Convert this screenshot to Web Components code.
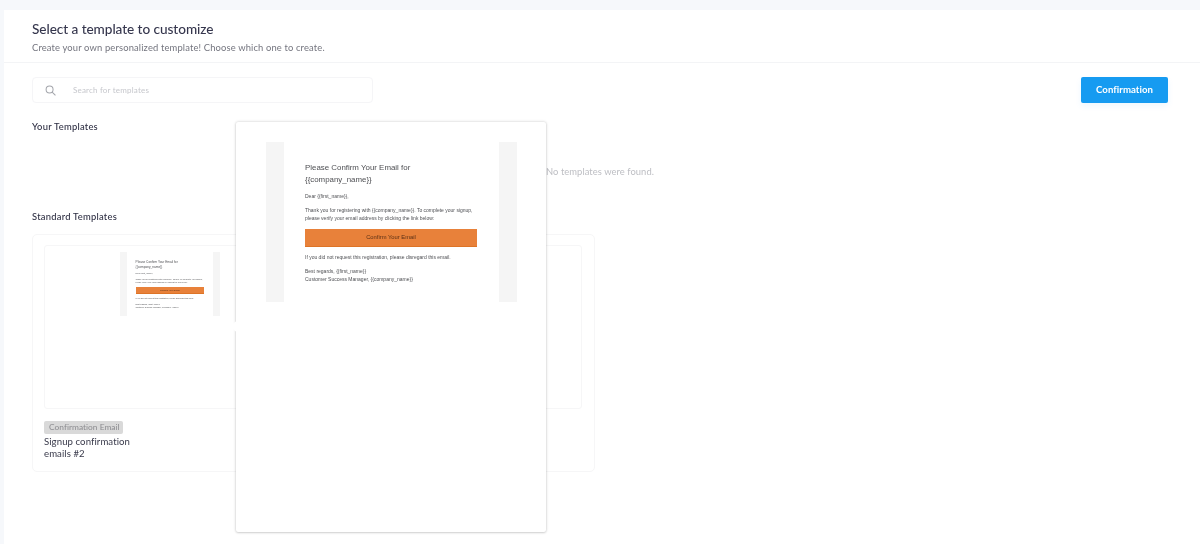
<!DOCTYPE html>
<html><head><meta charset="utf-8"><style>
html,body{margin:0;height:100%;overflow:hidden}
body{background:#f6f8fb;font-family:"Lato","Noto Sans",sans-serif;color:#2d2f45}
</style></head><body>
<template-app></template-app>
<script>
function def(name,css,html){
  customElements.define(name,class extends HTMLElement{
    constructor(){super();const r=this.attachShadow({mode:'open'});r.innerHTML='<style>'+css+'</style>'+html;}
  });
}
def('page-header',`:host{display:block;height:53px;box-sizing:border-box;padding:12px 28px 0;border-bottom:1px solid #f3f4f6}
h1{margin:0;font:500 13.6px/14px "Lato",sans-serif;letter-spacing:-.05px;color:#35364d}
p{margin:6px 0 0;font:400 9.4px/12px "Lato",sans-serif;letter-spacing:.15px;color:#74757f}`,
`<h1><slot name="title"></slot></h1><p><slot name="sub"></slot></p>`);

def('search-box',`:host{display:flex;align-items:center;box-sizing:border-box;width:341px;height:26px;border:1px solid #f5f5f7;border-radius:4px;padding-left:12px;background:#fff}
svg{width:11px;height:11px;flex:none}
span{margin-left:17px;font:400 8px/10px "Lato",sans-serif;letter-spacing:.2px;color:#c6c7cc}`,
`<svg viewBox="0 0 12 12" fill="none" stroke="#a3a5ab" stroke-width="1.1"><circle cx="5" cy="5" r="3.8"/><path d="M7.8 7.8l3.6 3.6"/></svg><span><slot></slot></span>`);

def('blue-button',`:host{display:flex;align-items:center;justify-content:center;box-sizing:border-box;width:87px;height:26px;border-radius:2px;background:#169bf1;color:#fff;font:700 9.6px/12px "Lato",sans-serif;letter-spacing:.05px;box-shadow:0 3px 6px rgba(22,155,241,.08)}`,`<slot></slot>`);

def('section-title',`:host{display:block;font:500 9.4px/12px "Lato",sans-serif;letter-spacing:.25px;color:#2f3044}`,`<slot></slot>`);

def('email-preview',`:host{display:block;width:25.1em;height:16em;background:#fff;position:relative;font-family:"Liberation Sans",sans-serif;color:#4f5054}
.wrap{display:flex;height:100%}
.strip{width:1.8em;background:#f5f5f5;flex:none}
.body{flex:1;padding:1.97em 2.2em 0 2.1em;box-sizing:border-box;min-width:0}
h2{margin:0;font-weight:400;font-size:.79em;line-height:1.52;color:#4e4f53}
p{margin:0;font-size:.5em;line-height:1.55}
.dear{margin-top:1.36em}
.thanks{margin-top:1.44em}
.btn{margin:.61em 0 .72em;height:1.75em;background:#e8813a;border-bottom:.08em solid #dd7427;box-sizing:border-box;display:flex;align-items:center;justify-content:center}
.btn span{font-size:.58em;color:#5a3016}
.sign{margin-top:1.4em}`,
`<div class="wrap"><div class="strip"></div><div class="body">
<h2>Please Confirm Your Email for {{company_name}}</h2>
<p class="dear">Dear {{first_name}},</p>
<p class="thanks">Thank you for registering with {{company_name}}. To complete your signup, please verify your email address by clicking the link below:</p>
<div class="btn"><span>Confirm Your Email</span></div>
<p>If you did not request this registration, please disregard this email.</p>
<p class="sign">Best regards, {{first_name}}<br>Customer Success Manager, {{company_name}}</p>
</div><div class="strip"></div></div>`);

def('template-card',`:host{display:block;box-sizing:border-box;width:563px;height:238px;border:1px solid #f6f6f7;border-radius:5px;padding:10px 12px 0 11px}
.thumb{height:164px;box-sizing:border-box;border:1px solid #f6f6f7;border-radius:3px;display:flex;justify-content:flex-start;padding:6px 0 0 75px}
email-preview{font-size:4px}
.badge{display:inline-block;margin-top:12px;height:13px;padding:0 3px 0 5px;border-radius:2px;background:#d9d9d9;color:#8c8c90;font:400 8.4px/13px "Lato",sans-serif;letter-spacing:.02px}
.name{margin-top:2px;width:100px;font:400 9.6px/12px "Lato",sans-serif;letter-spacing:.08px;color:#38394a}`,
`<div class="thumb"><email-preview></email-preview></div><span class="badge"><slot name="tag"></slot></span><div class="name"><slot name="name"></slot></div>`);

def('preview-popover',`:host{display:block;position:absolute;left:232px;top:112px;width:310px;height:410px;box-sizing:border-box;background:#fff;border-radius:2px;padding:20px 29px 0 30px;box-shadow:0 0 3px rgba(0,0,0,.22),0 1px 2px rgba(0,0,0,.1)}
email-preview{font-size:10px}
i{position:absolute;left:-4px;top:201px;width:7px;height:7px;background:#fff;transform:rotate(45deg)}`,
`<i></i><email-preview></email-preview>`);

def('template-app',`:host{display:block;position:relative;margin:10px 0 0 4px;height:534px;background:#fff;filter:blur(.45px)}
.main{padding:14px 32px 0 28px}
.top{display:flex;justify-content:space-between}
section-title.a{margin-top:18px}
.empty{margin-top:33px;margin-left:514px;height:45px;font:400 9.4px/12px "Lato",sans-serif;letter-spacing:.06px;color:#bdbec3}
section-title.b{margin-top:0}
template-card{margin-top:11px}`,
`<page-header><span slot="title">Select a template to customize</span><span slot="sub">Create your own personalized template! Choose which one to create.</span></page-header>
<div class="main">
<div class="top"><search-box>Search for templates</search-box><blue-button>Confirmation</blue-button></div>
<section-title class="a">Your Templates</section-title>
<div class="empty">No templates were found.</div>
<section-title class="b">Standard Templates</section-title>
<template-card><span slot="tag">Confirmation Email</span><span slot="name">Signup confirmation emails #2</span></template-card>
</div>
<preview-popover></preview-popover>`);
</script>
</body></html>
